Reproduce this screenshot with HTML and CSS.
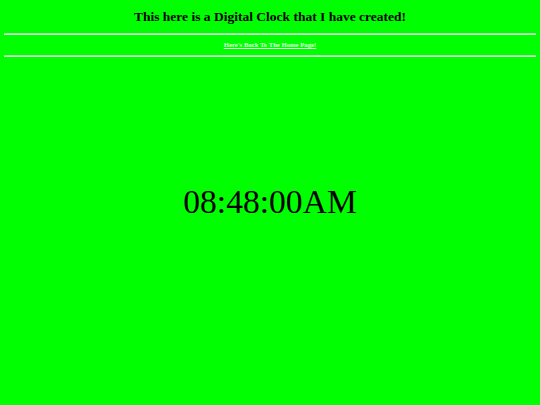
FILE: index.html
```html
<!DOCTYPE html>
<html>
<head>
<meta charset="utf-8">
<link rel="stylesheet" href="styles.css">
</head>
<body>
<h3 class="title">This here is a Digital Clock that I have created!</h3>
<hr class="rule">
<div class="nav"><a class="home" href="#">Here's Back To The Home Page!</a></div>
<hr class="rule rule-bottom">
<div class="clock">08:48:00AM</div>
</body>
</html>
```
FILE: styles.css
```css
html, body {
  margin: 0;
  padding: 0;
}
body {
  background: #00ff00;
  font-family: "Liberation Serif", "Times New Roman", serif;
  padding: 0 4px;
  height: 405px;
}
.title {
  margin: 0;
  padding-top: 8px;
  text-align: center;
  font-size: 13.5px;
  line-height: 17px;
  font-weight: bold;
  color: #000;
}
.rule {
  margin: 8px 0 0 0;
  border: 0;
  border-top: 1px solid #a8e8a8;
  border-bottom: 1px solid #ccf8cc;
  height: 0;
}
.rule-bottom {
  margin-top: 0;
}
.nav {
  text-align: center;
  padding: 6px 0;
  font-size: 6.7px;
  line-height: 8px;
  font-weight: bold;
}
.home {
  color: #e0ffe0;
}
.clock {
  text-align: center;
  margin-top: 126px;
  font-size: 33.6px;
  line-height: 38px;
  color: #000;
}
```
